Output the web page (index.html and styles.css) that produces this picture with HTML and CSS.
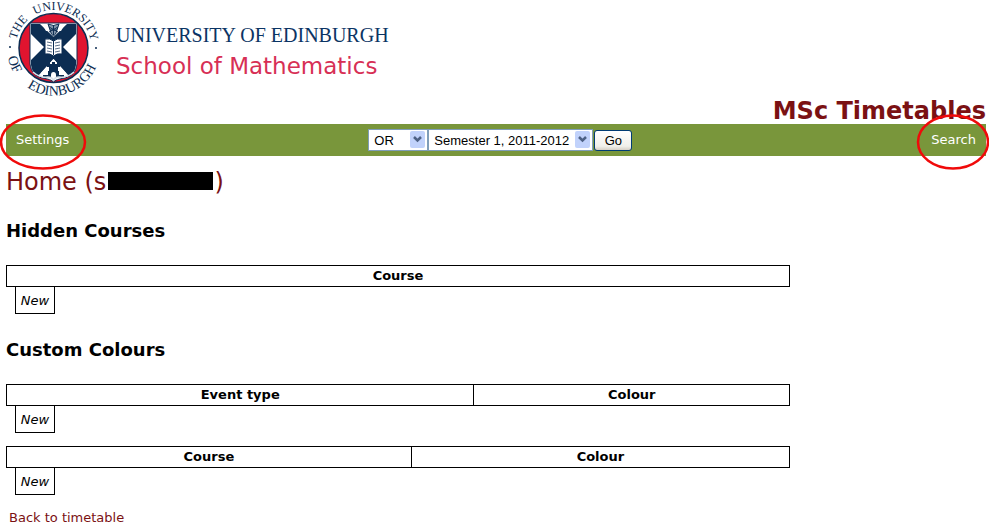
FILE: index.html
```html
<!DOCTYPE html>
<html lang="en">
<head>
<meta charset="utf-8">
<title>MSc Timetables</title>
<link rel="stylesheet" href="styles.css">
</head>
<body>
<header>
  <div class="brand">
    <svg class="crest" viewBox="0 0 96 96" role="img" aria-label="The University of Edinburgh crest">
      <defs>
        <path id="ring-top" d="M9.500 48A38 38 0 0 1 85.500 48"/>
        <path id="ring-bottom" d="M2.500 40A46 46 0 1 0 92.500 40"/>
      </defs>
      <circle cx="47.500" cy="48" r="34.500" fill="#e0142f" stroke="#0c2d52" stroke-width="1.500"/>
      <path d="M24 23H71V64C70 72 66 76 59 78C53 79 49 80 47.500 82C46 80 42 79 36 78C29 76 25 72 24 64Z" fill="#fff" stroke="#0c2d52"/>
      <path d="M25 24H34L47.500 37L61 24H70V34L57 47L70 60V65Q69 73 63 76L47.500 59L32 76Q26 73 25 65V60L38 47L25 34Z" fill="#0c2d52"/>
      <path d="M36 24H59L55 31H40Z" fill="#fff"/>
      <path d="M42 24Q47.500 27 53 24L51 30Q50 35 47.500 36Q45 35 44 30Z" fill="#8295aa" stroke="#0c2d52"/>
      <path d="M43 27L52 32M52 27L43 32M47.500 25V35M44 30H51" stroke="#0c2d52" fill="none"/>
      <path d="M39 39Q44 38 47.500 41Q51 38 56 39V54Q51 53 47.500 56Q44 53 39 54Z" fill="#fff" stroke="#0c2d52"/>
      <path d="M47.500 41V55" stroke="#0c2d52" fill="none"/>
      <path d="M41 42L46 43M41 45L46 46M41 48L46 49M41 51L46 52M49 43L54 42M49 46L54 45M49 49L54 48M49 52L54 51" stroke="#5d7189" stroke-width="1" fill="none"/>
      <path d="M47.500 59L60 73Q55 76 47.500 77Q40 76 35 73Z" fill="#fff"/>
      <path d="M41 62H44V64H46V62H49V64H51V62H54V67H52V71H53V75H58V77H50V75Q50 72 47.500 72Q45 72 45 75V77H37V75H42V71H43V67H41Z" fill="#0c2d52"/>
      <path d="M27 72Q34 78 42 77Q46 77 47.500 80Q49 77 53 77Q61 78 68 72" fill="none" stroke="#d8e0e8" stroke-width="1.500"/>
      <text class="ring"><textPath href="#ring-top" startOffset="17%">THE</textPath></text>
      <text class="ring"><textPath href="#ring-top" startOffset="64%">UNIVERSITY</textPath></text>
      <text class="ring lower"><textPath href="#ring-bottom" startOffset="16%">OF</textPath></text>
      <text class="ring lower"><textPath href="#ring-bottom" startOffset="58%">EDINBURGH</textPath></text>
      <circle cx="4" cy="47" r="1" fill="#0c2d52"/><circle cx="90" cy="48" r="1" fill="#0c2d52"/>
    </svg>
    <div class="names">
      <div class="university">UNIVERSITY OF EDINBURGH</div>
      <div class="school">School of Mathematics</div>
    </div>
  </div>
  <h1>MSc Timetables</h1>
  <nav>
    <a class="marked settings" href="#settings">Settings<svg class="mark" viewBox="0 0 88 56" aria-hidden="true"><ellipse cx="44" cy="28" rx="42" ry="26.500"/></svg></a>
    <form>
      <span class="picker"><select class="programme" aria-label="Programme"><option>OR</option></select><svg viewBox="0 0 15 17" aria-hidden="true"><rect width="15" height="17" rx="2"/><path d="M4 6L7.500 9.500L11 6"/></svg></span>
      <span class="picker"><select class="semester" aria-label="Semester"><option>Semester 1, 2011-2012</option></select><svg viewBox="0 0 15 17" aria-hidden="true"><rect width="15" height="17" rx="2"/><path d="M4 6L7.500 9.500L11 6"/></svg></span>
      <button type="button">Go</button>
    </form>
    <a class="marked search" href="#search">Search<svg class="mark" viewBox="0 0 74 56" aria-hidden="true"><ellipse cx="36" cy="28" rx="35" ry="26.500"/></svg></a>
  </nav>
</header>
<main>
  <h2>Home (s<span class="redacted"></span>)</h2>

  <h3>Hidden Courses</h3>
  <table>
    <thead><tr><th scope="col">Course</th></tr></thead>
  </table>
  <a class="new" href="#new-hidden">New</a>

  <h3>Custom Colours</h3>
  <table class="by-type">
    <thead><tr><th scope="col">Event type</th><th scope="col">Colour</th></tr></thead>
  </table>
  <a class="new" href="#new-type">New</a>
  <table class="by-course">
    <thead><tr><th scope="col">Course</th><th scope="col">Colour</th></tr></thead>
  </table>
  <a class="new" href="#new-course">New</a>

  <a class="back" href="#timetable">Back to timetable</a>
</main>
</body>
</html>
```
FILE: styles.css
```css
* { box-sizing: border-box; }

body {
  margin: 0;
  padding: 0 3px 0 6px;
  background: #fff;
  color: #000;
  font: 13px/20px "DejaVu Sans", Verdana, sans-serif;
}

a { color: #7b1113; text-decoration: none; }

.brand { display: flex; height: 98px; }
.crest { width: 96px; height: 96px; overflow: visible; }
.ring {
  font: 12px "Liberation Serif", serif;
  fill: #0c2d52;
  text-anchor: middle;
}
.ring.lower { font-size: 14px; }
.names { padding: 20px 0 0 14px; white-space: nowrap; }
.university { font: 20px/30px "Liberation Serif", serif; color: #0b3464; }
.school { font: 23px/32px "DejaVu Sans", sans-serif; color: #d72f55; }

h1 {
  margin: 0;
  font-size: 24px;
  line-height: 26px;
  text-align: right;
  color: #7b1113;
}

nav {
  display: flex;
  justify-content: space-between;
  align-items: center;
  height: 32px;
  padding: 0 10px;
  background: #79963b;
}
nav a { color: #fff; }
.marked { position: relative; }
.mark {
  position: absolute;
  top: 50%;
  left: 50%;
  height: 56px;
  transform: translate(-50%, -50%);
  margin-top: 2px;
  overflow: visible;
  fill: none;
  stroke: #f00a0a;
  stroke-width: 2.500px;
  pointer-events: none;
}
.settings .mark { width: 88px; }
.search .mark { width: 74px; }

form { display: flex; align-items: center; }
.picker { position: relative; display: flex; }
.picker svg {
  position: absolute;
  top: 2px;
  right: 3px;
  width: 15px;
  height: 17px;
  pointer-events: none;
}
.picker rect { fill: #c1d2fb; }
.picker path { fill: none; stroke: #4d6185; stroke-width: 2.500px; }
select {
  appearance: none;
  height: 22px;
  margin: 0;
  padding: 0 5px;
  border: 1px solid #7f9db9;
  border-radius: 0;
  background: #fff;
  color: #000;
  font: 13px "Liberation Sans", Arial, sans-serif;
}
.programme { width: 60px; }
.semester { width: 165px; }
button {
  width: 38px;
  height: 21px;
  margin-left: 1px;
  padding: 0;
  border: 1px solid #003c74;
  border-radius: 3px;
  background: linear-gradient(#fff, #f0f0ea 80%, #d6d0c5);
  color: #000;
  font: 13px "Liberation Sans", Arial, sans-serif;
}

h2 {
  margin: 10px 0 0;
  font-size: 24px;
  line-height: 32px;
  font-weight: 400;
  color: #7b1113;
}
.redacted {
  display: inline-block;
  width: 105px;
  height: 18px;
  margin: 0 1px 0 2px;
  background: #000;
}
h3 {
  margin: 21px 0 22px;
  font-size: 18px;
  line-height: 24px;
}

table {
  width: 80%;
  table-layout: fixed;
  border-collapse: collapse;
}
th {
  height: 21px;
  padding: 0;
  border: 1px solid #000;
  line-height: 20px;
}
.by-type th:first-child { width: 59.700%; }
.by-course th:first-child { width: 51.700%; }

.new {
  display: block;
  width: 40px;
  height: 27px;
  margin-left: 9px;
  border: 1px solid #000;
  border-top: 0;
  color: #000;
  font: italic 13px/27px "DejaVu Sans", Verdana, sans-serif;
  text-align: center;
}
.new + h3 { margin-top: 24px; }
.new + table { margin-top: 13px; }
.back {
  display: block;
  margin: 14px 0 0 3px;
  line-height: 18px;
}
```
